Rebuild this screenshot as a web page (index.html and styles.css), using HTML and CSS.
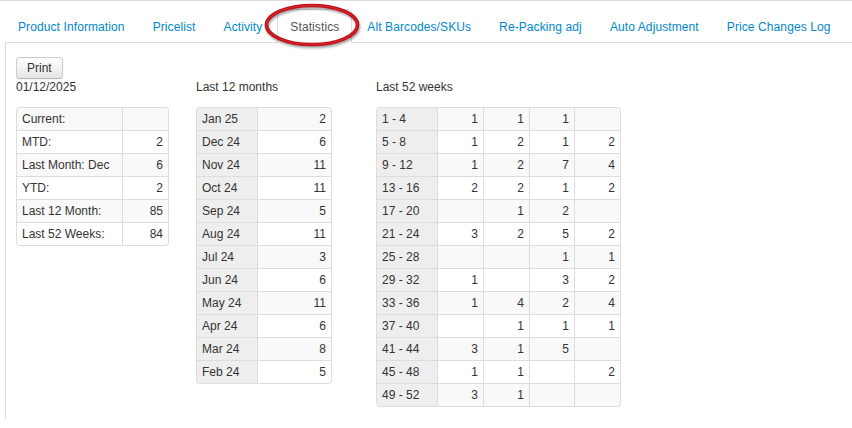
FILE: index.html
```html
<!DOCTYPE html>
<html lang="en">
<head>
  <meta charset="UTF-8">
  <meta name="viewport" content="width=device-width, initial-scale=1.0">
  <title>Statistics</title>
  <link rel="stylesheet" href="styles.css">
</head>
<body>
  <div class="tabs">
    <ul class="nav-tabs">
      <li><a href="#">Product Information</a></li>
      <li><a href="#">Pricelist</a></li>
      <li><a href="#">Activity</a></li>
      <li class="active"><a href="#">Statistics</a></li>
      <li><a href="#">Alt Barcodes/SKUs</a></li>
      <li><a href="#">Re-Packing adj</a></li>
      <li><a href="#">Auto Adjustment</a></li>
      <li><a href="#">Price Changes Log</a></li>
    </ul>

    <div class="tab-pane">
      <button class="btn" type="button">Print</button>

      <div class="stats">
        <div class="stats-col">
          <div class="stats-title">01/12/2025</div>
          <table class="grid grid-summary">
            <colgroup><col class="w-106"><col class="w-46"></colgroup>
            <tbody>
              <tr><td>Current:</td><td class="num"></td></tr>
              <tr><td>MTD:</td><td class="num">2</td></tr>
              <tr><td>Last Month: Dec</td><td class="num">6</td></tr>
              <tr><td>YTD:</td><td class="num">2</td></tr>
              <tr><td>Last 12 Month:</td><td class="num">85</td></tr>
              <tr><td>Last 52 Weeks:</td><td class="num">84</td></tr>
            </tbody>
          </table>
        </div>

        <div class="stats-col">
          <div class="stats-title">Last 12 months</div>
          <table class="grid grid-months">
            <colgroup><col class="w-61"><col class="w-74"></colgroup>
            <tbody>
              <tr><th>Jan 25</th><td class="num">2</td></tr>
              <tr><th>Dec 24</th><td class="num">6</td></tr>
              <tr><th>Nov 24</th><td class="num">11</td></tr>
              <tr><th>Oct 24</th><td class="num">11</td></tr>
              <tr><th>Sep 24</th><td class="num">5</td></tr>
              <tr><th>Aug 24</th><td class="num">11</td></tr>
              <tr><th>Jul 24</th><td class="num">3</td></tr>
              <tr><th>Jun 24</th><td class="num">6</td></tr>
              <tr><th>May 24</th><td class="num">11</td></tr>
              <tr><th>Apr 24</th><td class="num">6</td></tr>
              <tr><th>Mar 24</th><td class="num">8</td></tr>
              <tr><th>Feb 24</th><td class="num">5</td></tr>
            </tbody>
          </table>
        </div>

        <div class="stats-col">
          <div class="stats-title">Last 52 weeks</div>
          <table class="grid grid-weeks">
            <colgroup><col class="w-61"><col class="w-46"><col class="w-46"><col class="w-45"><col class="w-46"></colgroup>
            <tbody>
              <tr><th>1 - 4</th><td class="num">1</td><td class="num">1</td><td class="num">1</td><td class="num"></td></tr>
              <tr><th>5 - 8</th><td class="num">1</td><td class="num">2</td><td class="num">1</td><td class="num">2</td></tr>
              <tr><th>9 - 12</th><td class="num">1</td><td class="num">2</td><td class="num">7</td><td class="num">4</td></tr>
              <tr><th>13 - 16</th><td class="num">2</td><td class="num">2</td><td class="num">1</td><td class="num">2</td></tr>
              <tr><th>17 - 20</th><td class="num"></td><td class="num">1</td><td class="num">2</td><td class="num"></td></tr>
              <tr><th>21 - 24</th><td class="num">3</td><td class="num">2</td><td class="num">5</td><td class="num">2</td></tr>
              <tr><th>25 - 28</th><td class="num"></td><td class="num"></td><td class="num">1</td><td class="num">1</td></tr>
              <tr><th>29 - 32</th><td class="num">1</td><td class="num"></td><td class="num">3</td><td class="num">2</td></tr>
              <tr><th>33 - 36</th><td class="num">1</td><td class="num">4</td><td class="num">2</td><td class="num">4</td></tr>
              <tr><th>37 - 40</th><td class="num"></td><td class="num">1</td><td class="num">1</td><td class="num">1</td></tr>
              <tr><th>41 - 44</th><td class="num">3</td><td class="num">1</td><td class="num">5</td><td class="num"></td></tr>
              <tr><th>45 - 48</th><td class="num">1</td><td class="num">1</td><td class="num"></td><td class="num">2</td></tr>
              <tr><th>49 - 52</th><td class="num">3</td><td class="num">1</td><td class="num"></td><td class="num"></td></tr>
            </tbody>
          </table>
        </div>
      </div>
    </div>
  </div>

  <!-- red marker ring around the current tab -->
  <svg class="ring" width="104" height="54" viewBox="0 0 104 54">
    <ellipse cx="50" cy="24" rx="45.5" ry="19.5" fill="none" stroke="#bf1119" stroke-width="3.6"/>
    <ellipse cx="50" cy="24" rx="45.5" ry="19.5" fill="none" stroke="#dc2a2f" stroke-width="1"/>
  </svg>
</body>
</html>
```

FILE: styles.css
```css
* {
  box-sizing: border-box;
}
body {
  margin: 0;
  border-top: 1px solid #ddd;
  font-family: "Liberation Sans", Arial, sans-serif;
  font-size: 12px; line-height: 18px;
  color: #333;
}

/* tab strip */
.tabs {
  margin-left: 5px;
}
.nav-tabs {
  display: flex;
  margin: 0; padding: 8px 0 0;
  list-style: none;
  border-bottom: 1px solid #ddd;
}
.nav-tabs li {
  margin-bottom: -1px;
}
.nav-tabs a {
  display: block;
  padding: 8px 12px 6px;
  margin-right: 2px;
  border: 1px solid transparent;
  border-radius: 4px 4px 0 0;
  color: #0088cc;
  letter-spacing: 0.1px;
  text-decoration: none;
}
.nav-tabs .active a {
  color: #555;
  background: #fff;
  border-color: #ddd #ddd transparent;
}

.tab-pane {
  border-left: 1px solid #ddd;
  padding: 14px 10px 12px;
}

.btn {
  display: block;
  height: 22px;
  padding: 2px 10px 1px;
  font: inherit; line-height: 17px;
  color: #333;
  background: linear-gradient(#fff, #e6e6e6);
  border: 1px solid #ccc;
  border-bottom-color: #b3b3b3;
  border-radius: 4px;
  box-shadow: inset 0 1px 0 rgba(255, 255, 255, 0.2), 0 1px 2px rgba(0, 0, 0, 0.05);
}

/* three blocks side by side, 180px each */
.stats {
  display: flex;
}
.stats-col {
  flex: none;
  width: 180px;
}
.stats-title {
  line-height: 16px;
  margin-bottom: 12px;
}

/* bordered + striped tables */
.grid {
  table-layout: fixed;
  border-collapse: separate; border-spacing: 0;
  border: 1px solid #ddd; border-left: 0;
  border-radius: 4px;
}
.grid-summary { width: 153px; }
.grid-months { width: 136px; }
.grid-weeks { width: 245px; }

.w-106 { width: 106px; }
.w-74 { width: 74px; }
.w-61 { width: 61px; }
.w-46 { width: 46px; }
.w-45 { width: 45px; }

.grid td, .grid th {
  padding: 2px 5px;
  line-height: 18px;
  font-weight: normal;
  text-align: left;
  white-space: nowrap;
  border-left: 1px solid #ddd;
  border-top: 1px solid #ddd;
}
.grid tr:first-child td, .grid tr:first-child th {
  border-top: 0;
}
.grid tr:nth-child(odd) td {
  background: #f9f9f9;
}
.grid th {
  background: #eee;
}
.grid .num {
  text-align: right;
}
/* keep cell backgrounds inside the rounded corners */
.grid tr:first-child > :first-child { border-top-left-radius: 4px; }
.grid tr:first-child > :last-child { border-top-right-radius: 4px; }
.grid tr:last-child > :first-child { border-bottom-left-radius: 4px; }
.grid tr:last-child > :last-child { border-bottom-right-radius: 4px; }

.ring {
  position: absolute;
  left: 262px; top: 1px;
  filter: drop-shadow(1px 2px 1px rgba(0, 0, 0, 0.35));
}
```
